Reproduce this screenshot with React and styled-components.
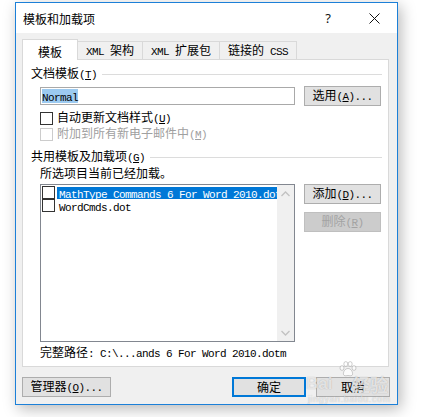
import React from "react";
import styled, { createGlobalStyle } from "styled-components";

const GlobalStyle = createGlobalStyle`
  html, body { margin: 0; padding: 0; background: #ffffff; }
  body {
    font-family: "Noto Sans CJK SC", "Noto Sans", sans-serif;
    font-size: 12px;
    line-height: 16px;
    color: #000;
  }
`;

const Page = styled.div`
  position: relative;
  width: 422px;
  height: 417px;
  box-sizing: border-box;
  padding: 2px 0 0 15px;
  overflow: hidden;
`;

const Window = styled.div`
  box-sizing: border-box;
  width: 383px;
  height: 403px;
  border: 1px solid #1c80d8;
  background: #f0f0f0;
  box-shadow: 3px 4px 14px rgba(0, 0, 0, 0.28);
  display: flex;
  flex-direction: column;
`;

const TitleBar = styled.div`
  flex: none;
  height: 30px;
  background: #ffffff;
  display: flex;
  align-items: center;
`;

const Title = styled.div`
  flex: 1;
  padding: 1px 0 0 7px;
  font-size: 12px;
  color: #000;
`;

const CaptionButton = styled.div`
  width: 46px;
  height: 30px;
  display: flex;
  align-items: center;
  justify-content: center;
  font-family: "Noto Sans", "DejaVu Sans", sans-serif;
  font-size: 13px;
  color: #111;
`;

const Body = styled.div`
  flex: 1;
  display: flex;
  flex-direction: column;
  padding: 6px 8px 7px 6px;
`;

const TabStrip = styled.div`
  display: flex;
  align-items: flex-end;
  height: 21px;
  margin-bottom: -1px;
  position: relative;
  z-index: 1;
`;

const Tab = styled.div`
  box-sizing: border-box;
  position: relative;
  z-index: ${(p) => (p.$active ? 2 : 1)};
  width: ${(p) => p.$w}px;
  height: ${(p) => (p.$active ? 21 : 18)}px;
  margin-bottom: ${(p) => (p.$active ? 0 : 1)}px;
  margin-left: ${(p) => (p.$first ? 0 : -1)}px;
  border: 1px solid #d9d9d9;
  border-bottom: none;
  background: ${(p) => (p.$active ? "#ffffff" : "#f0f0f0")};
  display: flex;
  align-items: center;
  justify-content: center;
  padding-top: ${(p) => (p.$active ? 3 : 1)}px;
  white-space: pre;
`;

const Panel = styled.div`
  box-sizing: border-box;
  height: 308px;
  background: #ffffff;
  border: 1px solid #d9d9d9;
  padding: 6px 7px 0 8px;
  display: flex;
  flex-direction: column;
`;

const SectionHeader = styled.div`
  display: flex;
  align-items: center;
  gap: 5px;
  height: 16px;
  margin-top: ${(p) => p.$top || 0}px;
  white-space: nowrap;
`;

const Rule = styled.div`
  flex: 1;
  height: 1px;
  background: #dcdcdc;
  margin-right: -1px;
`;

const Mono = styled.span`
  font-family: "Liberation Mono", "DejaVu Sans Mono", monospace;
  font-size: 11px;
  letter-spacing: -0.6px;
`;

const Key = styled.span`
  text-decoration: underline;
  text-underline-offset: 1px;
`;

const Indented = styled.div`
  margin-left: 9px;
  margin-top: ${(p) => p.$top || 0}px;
`;

const FieldRow = styled(Indented)`
  display: flex;
  align-items: center;
  gap: 9px;
  height: 20px;
`;

const TextField = styled.div`
  box-sizing: border-box;
  width: 255px;
  height: 18px;
  border: 1px solid #a9a9a9;
  background: #ffffff;
  padding: 1px;
  display: flex;
  align-items: center;
`;

const Selected = styled.span`
  display: inline-block;
  height: 14px;
  line-height: 14px;
  background: #9ccaf0;
  color: #000;
`;

const Button = styled.div`
  box-sizing: border-box;
  width: ${(p) => p.$w}px;
  height: 20px;
  background: ${(p) => (p.$disabled ? "#cccccc" : "#e1e1e1")};
  border: ${(p) =>
    p.$default ? "2px solid #0078d7" : `1px solid ${p.$disabled ? "#bfbfbf" : "#adadad"}`};
  color: ${(p) => (p.$disabled ? "#a3a3a3" : "#000")};
  display: flex;
  align-items: center;
  justify-content: center;
  white-space: nowrap;
  flex: none;
`;

const CheckRow = styled(Indented)`
  display: flex;
  align-items: center;
  gap: 4px;
  height: 16px;
  color: ${(p) => (p.$disabled ? "#a0a0a0" : "#000")};
  white-space: nowrap;
`;

const Box = styled.span`
  box-sizing: border-box;
  flex: none;
  width: 13px;
  height: 13px;
  background: #ffffff;
  border: 1px solid ${(p) => (p.$disabled ? "#cccccc" : "#333333")};
`;

const InfoText = styled(Indented)`
  height: 16px;
  white-space: nowrap;
`;

const ListRow = styled(Indented)`
  display: flex;
  gap: 9px;
  height: 158px;
`;

const ListBox = styled.div`
  box-sizing: border-box;
  width: 255px;
  height: 158px;
  border: 1px solid #828790;
  background: #ffffff;
  display: flex;
`;

const ListItems = styled.div`
  flex: 1;
  min-width: 0;
  padding: 1px 0 0 1px;
  display: flex;
  flex-direction: column;
`;

const ListItem = styled.div`
  display: flex;
  align-items: center;
  gap: 2px;
  height: 13px;
`;

const ItemLabel = styled.div`
  flex: 1;
  min-width: 0;
  height: 12px;
  line-height: 12px;
  overflow: hidden;
  white-space: nowrap;
  padding-left: 2px;
  background: ${(p) => (p.$selected ? "#0078d7" : "transparent")};
  color: ${(p) => (p.$selected ? "#ffffff" : "#000")};
`;

const ScrollBar = styled.div`
  flex: none;
  width: 17px;
  background: #f0f0f0;
  display: flex;
  flex-direction: column;
  justify-content: space-between;
`;

const ScrollArrow = styled.div`
  width: 17px;
  height: 17px;
  display: flex;
  align-items: center;
  justify-content: center;
`;

const ButtonColumn = styled.div`
  display: flex;
  flex-direction: column;
  gap: 8px;
`;

const PathLine = styled(Indented)`
  height: 16px;
  white-space: pre;
`;

const Footer = styled.div`
  margin-top: 10px;
  display: flex;
  justify-content: space-between;
`;

const FooterGroup = styled.div`
  display: flex;
  gap: 10px;
  margin-right: -1px;
`;

const Watermark = styled.div`
  position: absolute;
  left: 304px;
  top: 360px;
  width: 92px;
  height: 48px;
  pointer-events: none;
  color: rgba(255, 255, 255, 0.7);
  text-shadow: 0 0 1px rgba(0, 0, 0, 0.3);
`;

const WmBai = styled.span`
  position: absolute;
  left: 2px;
  top: 14px;
  font-family: "Liberation Sans", sans-serif;
  font-weight: bold;
  font-size: 17px;
  line-height: 20px;
`;

const WmJing = styled.span`
  position: absolute;
  left: 48px;
  top: 14px;
  font-family: "Noto Sans CJK SC", sans-serif;
  font-weight: bold;
  font-size: 18px;
  line-height: 20px;
`;

const WmUrl = styled.span`
  position: absolute;
  left: 4px;
  top: 34px;
  font-family: "Liberation Sans", sans-serif;
  font-size: 9px;
  line-height: 10px;
  letter-spacing: 0.6px;
`;

const WmPaw = styled.svg`
  position: absolute;
  left: 35px;
  top: 1px;
`;

const Chevron = ({ up }) => (
  <svg width="9" height="6" viewBox="0 0 9 6">
    <path
      d={up ? "M0.5 5 L4.5 1 L8.5 5" : "M0.5 1 L4.5 5 L8.5 1"}
      fill="none"
      stroke="#c2c2c2"
      strokeWidth="1.3"
    />
  </svg>
);

const CloseIcon = () => (
  <svg width="11" height="11" viewBox="0 0 11 11">
    <path d="M0.5 0.5 L10.5 10.5 M10.5 0.5 L0.5 10.5" stroke="#111" strokeWidth="1" />
  </svg>
);

const Label = ({ text, k, after = "" }) => (
  <span>
    {text}
    <Mono>
      (<Key>{k}</Key>){after}
    </Mono>
  </span>
);

export default function App() {
  return (
    <>
      <GlobalStyle />
      <Page>
        <Window>
          <TitleBar>
            <Title>模板和加载项</Title>
            <CaptionButton>?</CaptionButton>
            <CaptionButton>
              <CloseIcon />
            </CaptionButton>
          </TitleBar>
          <Body>
            <TabStrip>
              <Tab $active $first $w={56}>
                <span>模板</span>
              </Tab>
              <Tab $w={66}>
                <span>
                  <Mono>XML </Mono>架构
                </span>
              </Tab>
              <Tab $w={78}>
                <span>
                  <Mono>XML </Mono>扩展包
                </span>
              </Tab>
              <Tab $w={78}>
                <span>
                  链接的<Mono> CSS</Mono>
                </span>
              </Tab>
            </TabStrip>
            <Panel>
              <SectionHeader>
                <Label text="文档模板" k="T" />
                <Rule />
              </SectionHeader>
              <FieldRow $top={4}>
                <TextField>
                  <Selected>
                    <Mono>Normal</Mono>
                  </Selected>
                </TextField>
                <Button $w={77}>
                  <Label text="选用" k="A" after="..." />
                </Button>
              </FieldRow>
              <CheckRow $top={4}>
                <Box />
                <Label text="自动更新文档样式" k="U" />
              </CheckRow>
              <CheckRow $disabled>
                <Box $disabled />
                <Label text="附加到所有新电子邮件中" k="M" />
              </CheckRow>
              <SectionHeader $top={7}>
                <Label text="共用模板及加载项" k="G" />
                <Rule />
              </SectionHeader>
              <InfoText>所选项目当前已经加载。</InfoText>
              <ListRow $top={3}>
                <ListBox>
                  <ListItems>
                    <ListItem>
                      <Box />
                      <ItemLabel $selected>
                        <Mono>MathType Commands 6 For Word 2010.dotm</Mono>
                      </ItemLabel>
                    </ListItem>
                    <ListItem>
                      <Box />
                      <ItemLabel>
                        <Mono>WordCmds.dot</Mono>
                      </ItemLabel>
                    </ListItem>
                  </ListItems>
                  <ScrollBar>
                    <ScrollArrow>
                      <Chevron up />
                    </ScrollArrow>
                    <ScrollArrow>
                      <Chevron />
                    </ScrollArrow>
                  </ScrollBar>
                </ListBox>
                <ButtonColumn>
                  <Button $w={77}>
                    <Label text="添加" k="D" after="..." />
                  </Button>
                  <Button $w={77} $disabled>
                    <Label text="删除" k="R" />
                  </Button>
                </ButtonColumn>
              </ListRow>
              <PathLine $top={2}>
                完整路径<Mono>: C:\...ands 6 For Word 2010.dotm</Mono>
              </PathLine>
            </Panel>
            <Footer>
              <Button $w={89}>
                <Label text="管理器" k="O" after="..." />
              </Button>
              <FooterGroup>
                <Button $w={74} $default>
                  确定
                </Button>
                <Button $w={74}>取消</Button>
              </FooterGroup>
            </Footer>
          </Body>
        </Window>
        <Watermark>
          <WmPaw width="18" height="16" viewBox="0 0 18 16">
            <g fill="rgba(255,255,255,0.7)" stroke="rgba(120,120,120,0.45)" strokeWidth="0.8">
              <ellipse cx="3" cy="7" rx="2" ry="2.4" />
              <ellipse cx="6.8" cy="3" rx="2" ry="2.4" />
              <ellipse cx="11.2" cy="3" rx="2" ry="2.4" />
              <ellipse cx="15" cy="7" rx="2" ry="2.4" />
              <path d="M9 7.5 C6 7.5 4 11 4.5 13.5 C5 15.5 8 14.5 9 14.5 C10 14.5 13 15.5 13.5 13.5 C14 11 12 7.5 9 7.5 Z" />
            </g>
          </WmPaw>
          <WmBai>Bai</WmBai>
          <WmJing>经验</WmJing>
          <WmUrl>jingyan.baidu.com</WmUrl>
        </Watermark>
      </Page>
    </>
  );
}
